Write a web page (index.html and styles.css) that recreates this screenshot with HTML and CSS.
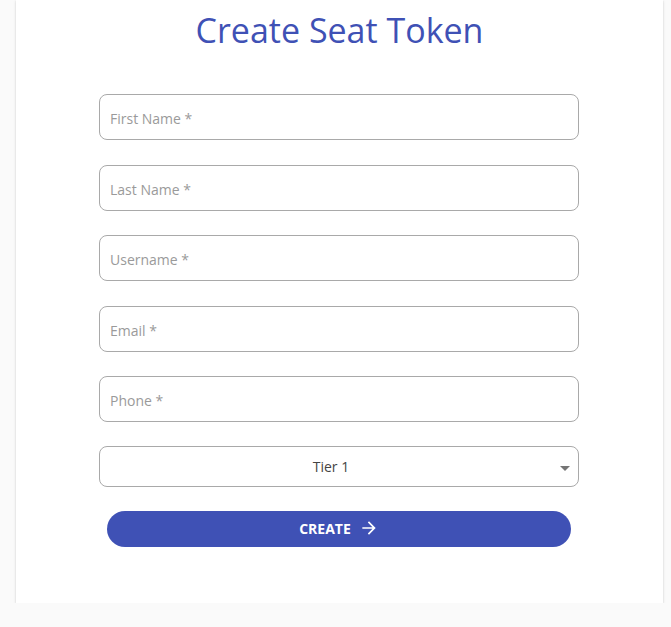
FILE: index.html
```html
<!DOCTYPE html>
<html>
<head>
<meta charset="utf-8">
<link rel="stylesheet" href="styles.css">
</head>
<body>
<div class="card">
  <h1 class="title">Create Seat Token</h1>
  <form class="form">
    <div class="field"><input class="input" type="text" placeholder="First Name *"></div>
    <div class="field"><input class="input" type="text" placeholder="Last Name *"></div>
    <div class="field"><input class="input" type="text" placeholder="Username *"></div>
    <div class="field"><input class="input" type="text" placeholder="Email *"></div>
    <div class="field"><input class="input" type="text" placeholder="Phone *"></div>
    <div class="select">
      <span class="select-value">Tier 1</span>
      <span class="caret"></span>
    </div>
    <button class="btn" type="button">CREATE
      <svg class="btn-icon" width="20" height="20" viewBox="0 0 24 24"><path d="M12 4l-1.41 1.41L16.17 11H4v2h12.17l-5.58 5.59L12 20l8-8z" fill="#fff"/></svg>
    </button>
  </form>
</div>
</body>
</html>
```
FILE: styles.css
```css
html, body {
  margin: 0;
  padding: 0;
  background: #fafafa;
  font-family: "Open Sans", "Liberation Sans", sans-serif;
}
.card {
  margin: 0 8px 0 16px;
  width: 647px;
  height: 603px;
  background: #fff;
  box-shadow: 0 2px 1px -1px rgba(0,0,0,0.2), 0 1px 1px 0 rgba(0,0,0,0.14), 0 1px 3px 0 rgba(0,0,0,0.12);
  box-sizing: border-box;
  padding-top: 10px;
}
.title {
  margin: 0;
  text-align: center;
  font-weight: 400;
  font-size: 34px;
  line-height: 40px;
  color: #3f51b5;
}
.form {
  width: 480px;
  margin: 44px 0 0 83px;
  display: flex;
  flex-direction: column;
  align-items: center;
}
.field {
  width: 100%;
  margin-bottom: 24px;
}
.field:nth-child(1), .field:nth-child(3) { margin-bottom: 25px; }
.input {
  display: block;
  width: 100%;
  height: 46px;
  box-sizing: border-box;
  border: 1px solid #a9a9a9;
  border-radius: 8px;
  padding: 2px 10px 0;
  font-family: "Open Sans", "Liberation Sans", sans-serif;
  font-size: 14px;
  color: #333;
  outline: none;
}
.input::placeholder { color: #9a9a9a; }
.select {
  width: 100%;
  height: 41px;
  box-sizing: border-box;
  border: 1px solid #a9a9a9;
  border-radius: 8px;
  display: flex;
  align-items: center;
  justify-content: center;
  padding-right: 16px;
  position: relative;
}
.select-value {
  font-size: 14px;
  color: #444;
}
.caret {
  position: absolute;
  right: 8px;
  top: 19px;
  width: 0;
  height: 0;
  border-left: 5px solid transparent;
  border-right: 5px solid transparent;
  border-top: 5px solid #757575;
}
.btn {
  margin-top: 24px;
  width: 464px;
  height: 36px;
  border: none;
  border-radius: 18px;
  background: #3f51b5;
  color: #fff;
  font-family: "Open Sans", "Liberation Sans", sans-serif;
  font-weight: 700;
  font-size: 14px;
  display: flex;
  align-items: center;
  justify-content: center;
  gap: 8px;
  padding: 0 0 2px;
}
.btn-icon { display: block; }
```
